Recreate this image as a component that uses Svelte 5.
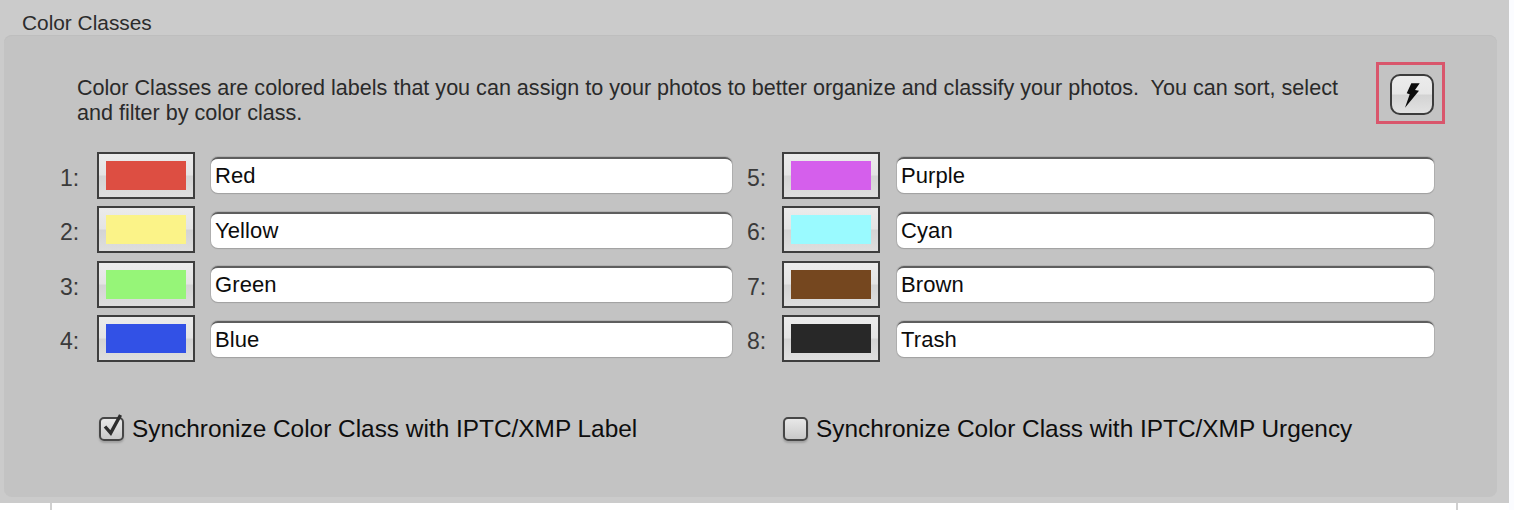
<script>
  const classes = [
    { num: 1, name: 'Red', color: '#dd4e42' },
    { num: 5, name: 'Purple', color: '#d55fec' },
    { num: 2, name: 'Yellow', color: '#fbf388' },
    { num: 6, name: 'Cyan', color: '#9afaff' },
    { num: 3, name: 'Green', color: '#96f578' },
    { num: 7, name: 'Brown', color: '#75471f' },
    { num: 4, name: 'Blue', color: '#3251e6' },
    { num: 8, name: 'Trash', color: '#282828' }
  ]
</script>

<div class="page">
  <div class="section">
    <div class="title">Color Classes</div>
    <div class="panel">
      <div class="intro">
        <p>Color Classes are colored labels that you can assign to your photos to better organize and classify your photos.&nbsp; You can sort, select and filter by color class.</p>
        <div class="bolt-wrap">
          <button class="bolt" aria-label="Auto apply">
            <svg width="18" height="26" viewBox="0 0 18 26">
              <path d="M8.3 1.3 L16.7 1.3 L12 8 L16 8.7 L2 25.7 L6.7 12.3 L3.7 11.3 Z" fill="#0c0c0c" />
            </svg>
          </button>
        </div>
      </div>

      <div class="grid">
        {#each classes as c}
          <div class="row" class:right={c.num > 4}>
            <span class="num">{c.num}:</span>
            <div class="well"><div class="swatch" style="background: {c.color}"></div></div>
            <input class="name" type="text" value={c.name} />
          </div>
        {/each}
      </div>

      <div class="checks">
        <div class="check">
          <span class="box">
            <svg class="tick" width="20" height="24" viewBox="0 0 20 24">
              <path d="M3 14.5 L8.7 21 L18.5 3" fill="none" stroke="#2e2e2e" stroke-width="3.4" />
            </svg>
          </span>
          <span>Synchronize Color Class with IPTC/XMP Label</span>
        </div>
        <div class="check second">
          <span class="box"></span>
          <span>Synchronize Color Class with IPTC/XMP Urgency</span>
        </div>
      </div>
    </div>
  </div>
  <div class="below">
    <div class="gutter"></div>
  </div>
</div>

<style>
  :global(body) {
    margin: 0;
    background: #fbfcff;
  }

  .page {
    width: 1514px;
    height: 510px;
    overflow: hidden;
    font-family: 'Liberation Sans', Arial, sans-serif;
  }

  .section {
    box-sizing: border-box;
    width: 1509px;
    height: 503px;
    padding: 0 12px 6px 4px;
    background: #cbcbcb;
    display: flex;
    flex-direction: column;
  }

  .title {
    height: 35px;
    padding: 13px 0 0 18px;
    box-sizing: border-box;
    font-size: 20.85px;
    line-height: 20px;
    color: #2c2c2c;
  }

  .panel {
    flex: 1;
    box-sizing: border-box;
    background: #c3c3c3;
    border-radius: 8px;
    box-shadow: inset 0 1px 0 #bebebe;
    padding: 39px 0 0 0;
  }

  .intro {
    display: flex;
    justify-content: space-between;
    padding: 0 63px 0 73px;
  }

  .intro p {
    margin: 1px 0 -1px;
    width: 1275px;
    font-size: 21.57px;
    line-height: 25px;
    color: #2a2a2a;
  }

  .bolt-wrap {
    position: relative;
  }

  .bolt-wrap::after {
    content: '';
    position: absolute;
    left: -14px;
    top: -12px;
    width: 69px;
    height: 62px;
    box-sizing: border-box;
    border: 3px solid #d9566c;
    pointer-events: none;
  }

  .bolt {
    all: unset;
    box-sizing: border-box;
    width: 44px;
    height: 41px;
    display: flex;
    align-items: center;
    justify-content: center;
    border: 2px solid #3c3c3c;
    border-radius: 10px;
    background: linear-gradient(#ececec 0%, #e6e6e6 48%, #d3d3d3 52%, #e2e2e2 100%);
  }

  .grid {
    display: grid;
    grid-template-columns: 728px 702px;
    row-gap: 8.6px;
    margin-top: 28px;
  }

  .row {
    display: flex;
    align-items: center;
    padding-left: 56px;
    height: 46px;
  }

  .row.right {
    padding-left: 15px;
  }

  .num {
    width: 37px;
    margin-top: 6px;
    font-size: 23px;
    color: #3a3a3a;
  }

  .right .num {
    width: 35px;
  }

  .well {
    box-sizing: border-box;
    width: 98px;
    height: 47px;
    padding: 7px 7px;
    border: 2px solid #3e3e3e;
    background: linear-gradient(#ebebeb 0%, #e4e4e4 48%, #d4d4d4 52%, #dedede 100%);
  }

  .swatch {
    height: 29px;
  }

  .name {
    all: unset;
    box-sizing: border-box;
    flex: 1;
    height: 36px;
    margin-left: 16px;
    padding: 0 0 0 4px;
    background: #fff;
    border-radius: 7px;
    border-top: 2px solid #5e5e5e;
    box-shadow: 0 1px 1px #a2a2a2, 0 0 0 1px #b0b0b0;
    font-size: 22px;
    letter-spacing: 0.1px;
    color: #0c0c0c;
  }

  .right .name {
    margin-left: 17px;
  }

  .checks {
    display: flex;
    margin-top: 52px;
    padding-left: 95px;
  }

  .check {
    display: flex;
    align-items: center;
    gap: 8px;
    width: 684px;
    font-size: 24.4px;
    line-height: 30px;
    color: #0e0e0e;
  }

  .box {
    position: relative;
    box-sizing: border-box;
    width: 25px;
    height: 24px;
    border: 2px solid #464646;
    border-radius: 5px;
    background: linear-gradient(#e8e8e8, #c9c9c9);
    box-shadow: 0 2px 2px #a0a0a0;
  }

  .tick {
    position: absolute;
    left: 1px;
    top: -7px;
  }

  .below {
    height: 7px;
    width: 1509px;
    background: #fff;
  }

  .gutter {
    box-sizing: border-box;
    margin-left: 50px;
    width: 1408px;
    height: 7px;
    border-left: 2px solid #d0d0d0;
    border-right: 2px solid #d0d0d0;
  }
</style>
